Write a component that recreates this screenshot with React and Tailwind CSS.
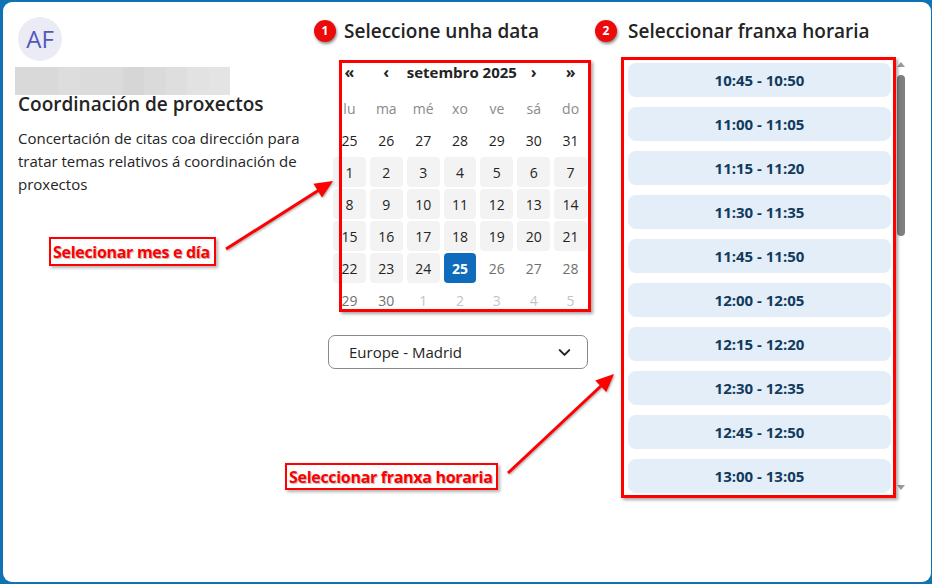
import { ChevronDown } from "lucide-react";

const slots = [
  "10:45 - 10:50",
  "11:00 - 11:05",
  "11:15 - 11:20",
  "11:30 - 11:35",
  "11:45 - 11:50",
  "12:00 - 12:05",
  "12:15 - 12:20",
  "12:30 - 12:35",
  "12:45 - 12:50",
  "13:00 - 13:05",
];

const weekdays = ["lu", "ma", "mé", "xo", "ve", "sá", "do"];

// kind: prev = previous month, day = available, sel = selected, off = not available, next = next month
const days = [
  ...[25, 26, 27, 28, 29, 30, 31].map((d) => ({ d, kind: "prev" })),
  ...Array.from({ length: 24 }, (_, i) => ({ d: i + 1, kind: "day" })),
  { d: 25, kind: "sel" },
  ...[26, 27, 28, 29, 30].map((d) => ({ d, kind: "off" })),
  ...[1, 2, 3, 4, 5].map((d) => ({ d, kind: "next" })),
];

const dayClass = {
  prev: "text-[#242424]",
  day: "bg-[#f3f3f3] text-[#242424]",
  sel: "bg-[#0f6cbd] text-white font-bold",
  off: "text-[#707070]",
  next: "text-[#c4c4c4]",
};

const mosaic = [
  ["w-[43px]", "bg-[#d9d9d9]"],
  ["w-[22px]", "bg-[#dddddd]"],
  ["w-[43px]", "bg-[#dbdbdb]"],
  ["w-[21px]", "bg-[#d6d6d6]"],
  ["w-[22px]", "bg-[#dadada]"],
  ["w-[21px]", "bg-[#dedede]"],
  ["w-[22px]", "bg-[#e2e2e2]"],
  ["w-[21px]", "bg-[#e4e4e4]"],
];

function Badge({ n }) {
  return (
    <div className="w-[22px] h-[22px] shrink-0 rounded-full bg-[#ec0a0a] text-white text-[12px] font-bold flex items-center justify-center shadow-[1px_2px_3px_rgba(0,0,0,0.45)]">
      {n}
    </div>
  );
}

export default function App() {
  return (
    <div className="relative w-[932px] h-[584px] bg-[#0e72b5] pt-[2px] pl-[3px] pb-[2px] pr-[1px] font-['Open_Sans',sans-serif] overflow-hidden">
      <div className="w-full h-full bg-white rounded-[9px] flex pl-[15px] pt-[15px]">
        {/* service info */}
        <div className="w-[296px] shrink-0">
          <div className="w-[44px] h-[44px] rounded-full bg-[#ebebf6] text-[#5359b9] text-[24px] flex items-center justify-center">
            AF
          </div>
          <div className="flex h-[28px] mt-[6px] -ml-[3px]">
            {mosaic.map(([w, c], i) => (
              <div key={i} className={`${w} ${c} h-full`} />
            ))}
          </div>
          <h1 className="-mt-[3px] text-[19px] leading-[24px] font-semibold text-[#242424] whitespace-nowrap">
            Coordinación de proxectos
          </h1>
          <p className="mt-[11px] text-[15px] leading-[23px] text-[#242424]">
            Concertación de citas coa dirección para tratar temas relativos á coordinación de proxectos
          </p>
        </div>

        {/* date */}
        <div className="w-[281px] shrink-0">
          <div className="flex items-center gap-[8px] mt-[2px] h-[24px]">
            <Badge n={1} />
            <span className="text-[19px] font-semibold text-[#242424] leading-[24px] whitespace-nowrap">Seleccione unha data</span>
          </div>
          <div className="ml-[19px] w-[254px]">
            <div className="grid grid-cols-7 gap-x-[4px] mt-[17px] h-[24px] items-center text-[#242424]">
              <span className="text-center text-[16px] font-bold">«</span>
              <span className="text-center text-[16px] font-bold">‹</span>
              <span className="col-span-3 text-center text-[15px] font-bold whitespace-nowrap">setembro 2025</span>
              <span className="text-center text-[16px] font-bold">›</span>
              <span className="text-center text-[16px] font-bold">»</span>
            </div>
            <div className="grid grid-cols-7 gap-x-[4px] mt-[8px] h-[33px] pb-[1px] items-center text-[14px] text-[#8a8a8a]">
              {weekdays.map((w) => (
                <span key={w} className="text-center">{w}</span>
              ))}
            </div>
            <div className="grid grid-cols-7 gap-x-[4px] gap-y-[2px] text-[14px]">
              {days.map((c, i) => (
                <div key={i} className={`h-[30px] rounded-[4px] flex items-center justify-center ${dayClass[c.kind]}`}>
                  {c.d}
                </div>
              ))}
            </div>
          </div>
          <button className="mt-[20px] ml-[14px] w-[260px] h-[34px] rounded-[7px] border border-[#8a8a8a] flex items-center justify-between pl-[20px] pr-[13px] text-[15px] text-[#242424]">
            <span>Europe - Madrid</span>
            <ChevronDown size={19} strokeWidth={2.6} className="text-[#242424]" />
          </button>
        </div>

        {/* time slots */}
        <div className="flex-1">
          <div className="flex items-center gap-[11px] mt-[2px] h-[24px]">
            <Badge n={2} />
            <span className="text-[19px] font-semibold text-[#242424] leading-[24px] whitespace-nowrap">Seleccionar franxa horaria</span>
          </div>
          <div className="flex mt-[15px] ml-[33px] h-[436px]">
            <div className="w-[263px] h-full overflow-hidden pt-[5px] flex flex-col gap-[10px]">
              {slots.map((s) => (
                <div key={s} className="h-[34px] shrink-0 rounded-[8px] bg-[#e3eef8] flex items-center justify-center text-[15px] font-bold text-[#123a5d]">
                  {s}
                </div>
              ))}
            </div>
            <div className="w-[9px] ml-[5px] h-full flex flex-col items-center pt-[4px]">
              <div className="w-0 h-0 border-l-[4px] border-r-[4px] border-b-[5px] border-l-transparent border-r-transparent border-b-[#9a9a9a]" />
              <div className="w-[8px] h-[161px] mt-[8px] rounded-full bg-[#7f7f7f]" />
              <div className="flex-1" />
              <div className="w-0 h-0 mb-[4px] border-l-[4px] border-r-[4px] border-t-[5px] border-l-transparent border-r-transparent border-t-[#9a9a9a]" />
            </div>
          </div>
        </div>
      </div>

      {/* annotations */}
      <div className="absolute left-[339px] top-[60px] w-[252px] h-[252px] border-[3px] border-[#ff0000] shadow-[2px_2px_3px_rgba(0,0,0,0.35)] pointer-events-none" />
      <div className="absolute left-[621px] top-[57px] w-[275px] h-[441px] border-[3px] border-[#ff0000] shadow-[2px_2px_3px_rgba(0,0,0,0.35)] pointer-events-none" />
      <div className="absolute left-[49px] top-[237px] w-[167px] h-[29px] border-2 border-[#ff0000] bg-white shadow-[2px_2px_3px_rgba(0,0,0,0.3)] flex items-center pl-[2px] text-[16px] font-bold text-[#ff0000] tracking-[-0.3px] [text-shadow:1px_1px_1px_rgba(0,0,0,0.3)] whitespace-nowrap">
        Selecionar mes e día
      </div>
      <div className="absolute left-[285px] top-[463px] w-[213px] h-[27px] border-2 border-[#ff0000] bg-white shadow-[2px_2px_3px_rgba(0,0,0,0.3)] flex items-center pl-[2px] text-[16px] font-bold text-[#ff0000] tracking-[-0.3px] [text-shadow:1px_1px_1px_rgba(0,0,0,0.3)] whitespace-nowrap">
        Seleccionar franxa horaria
      </div>
      <svg className="absolute left-0 top-0 pointer-events-none [filter:drop-shadow(1px_1px_1px_rgba(0,0,0,0.35))]" width="932" height="584">
        <line x1="226" y1="249" x2="319" y2="190" stroke="#ff0000" strokeWidth="3" />
        <polygon points="333,181 322,197.5 313.5,183.8" fill="#ff0000" />
        <line x1="508" y1="473" x2="602" y2="385" stroke="#ff0000" strokeWidth="3" />
        <polygon points="614,374 606.3,392.1 595.3,380.5" fill="#ff0000" />
      </svg>
    </div>
  );
}
